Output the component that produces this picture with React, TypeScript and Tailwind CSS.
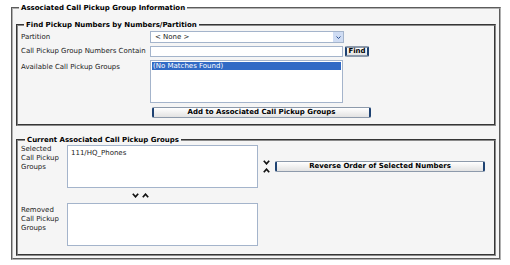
import React from "react";

const font = "font-['DejaVu_Sans',Verdana,sans-serif]";

function Chevron({ up }: { up?: boolean }) {
  return (
    <svg width="7" height="5" viewBox="0 0 7 5" className="block">
      <path
        d={up ? "M0.8 4.2 L3.5 1.2 L6.2 4.2" : "M0.8 0.8 L3.5 3.8 L6.2 0.8"}
        fill="none"
        stroke="#111"
        strokeWidth="1.7"
      />
    </svg>
  );
}

function Btn({ children, className = "" }: { children: React.ReactNode; className?: string }) {
  return (
    <div
      className={`flex items-center justify-center rounded-[2px] border border-[#8d9aab] border-l-2 border-r-2 border-l-[#1e4272] border-r-[#1e4272] bg-linear-to-b from-white to-[#e2e2e2] text-[7px] font-bold leading-none text-black ${className}`}
    >
      {children}
    </div>
  );
}

function ListBox({ children, className = "" }: { children?: React.ReactNode; className?: string }) {
  return (
    <div className={`border border-[#a4b4cb] bg-white ${className}`}>{children}</div>
  );
}

export default function App() {
  return (
    <div className={`w-[510px] h-[265px] bg-white pt-[3px] pl-[11px] ${font} text-[7px] text-[#222]`}>
      <fieldset className="w-[490px] border-2 [border-style:groove] border-[#b0b0b0] bg-[#f5f5f5] pb-[2px]">
        <legend className="ml-[6px] px-[2px] font-bold text-black leading-[10px]">
          Associated Call Pickup Group Information
        </legend>

        {/* find section */}
        <fieldset className="mx-[3px] mt-[7px] border-2 [border-style:groove] border-[#8a8a8a] pl-[3px] pt-[1px] pb-[6px]">
          <legend className="ml-[3px] px-[2px] font-bold text-black leading-[10px]">
            Find Pickup Numbers by Numbers/Partition
          </legend>
          <div className="flex h-[12px] items-center">
            <div className="w-[129px]">Partition</div>
            <div className="flex h-[12px] w-[194px] items-center justify-between border border-[#a4b4cb] bg-white pl-[4px]">
              <span>&lt; None &gt;</span>
              <div className="flex h-full w-[10px] items-center justify-center bg-[#cfdcf3]">
                <svg width="5" height="3" viewBox="0 0 5 3">
                  <path d="M0.5 0.5 L2.5 2.5 L4.5 0.5" fill="none" stroke="#2a4f8f" strokeWidth="1" />
                </svg>
              </div>
            </div>
          </div>
          <div className="mt-[3px] flex h-[11px] items-center">
            <div className="w-[129px]">Call Pickup Group Numbers Contain</div>
            <div className="h-[11px] w-[193px] border border-[#a4b4cb] bg-white" />
            <Btn className="ml-[2px] h-[11px] w-[24px] rounded-[1px] border-2 border-[#6d84a6]">Find</Btn>
          </div>
          <div className="mt-[3px] flex">
            <div className="w-[129px] pt-[2px]">Available Call Pickup Groups</div>
            <ListBox className="h-[43px] w-[193px] p-[1px]">
              <div className="h-[8px] bg-[#316ac5] pl-[1px] leading-[8px] text-white">(No Matches Found)</div>
            </ListBox>
          </div>
          <div className="mt-[4px] pl-[131px]">
            <Btn className="h-[11px] w-[219px]">Add to Associated Call Pickup Groups</Btn>
          </div>
        </fieldset>

        {/* current section */}
        <fieldset className="mx-[3px] mt-[9px] border-2 [border-style:groove] border-[#8a8a8a] pl-[3px] pt-[0px] pb-[8px]">
          <legend className="ml-[4px] px-[2px] font-bold text-black leading-[10px]">
            Current Associated Call Pickup Groups
          </legend>
          <div className="flex items-center">
            <div className="w-[46px] self-start leading-[9px]">
              Selected
              <br />
              Call Pickup
              <br />
              Groups
            </div>
            <ListBox className="h-[43px] w-[191px] pl-[3px] pt-[2px]">111/HQ_Phones</ListBox>
            <div className="ml-[5px] flex flex-col gap-[3px]">
              <Chevron />
              <Chevron up />
            </div>
            <Btn className="ml-[5px] h-[11px] w-[210px]">Reverse Order of Selected Numbers</Btn>
          </div>
          <div className="flex h-[15px] items-center gap-[3px] pl-[111px]">
            <Chevron />
            <Chevron up />
          </div>
          <div className="flex">
            <div className="w-[46px] pt-[3px] leading-[9px]">
              Removed
              <br />
              Call Pickup
              <br />
              Groups
            </div>
            <ListBox className="h-[43px] w-[191px]" />
          </div>
        </fieldset>
      </fieldset>
    </div>
  );
}
